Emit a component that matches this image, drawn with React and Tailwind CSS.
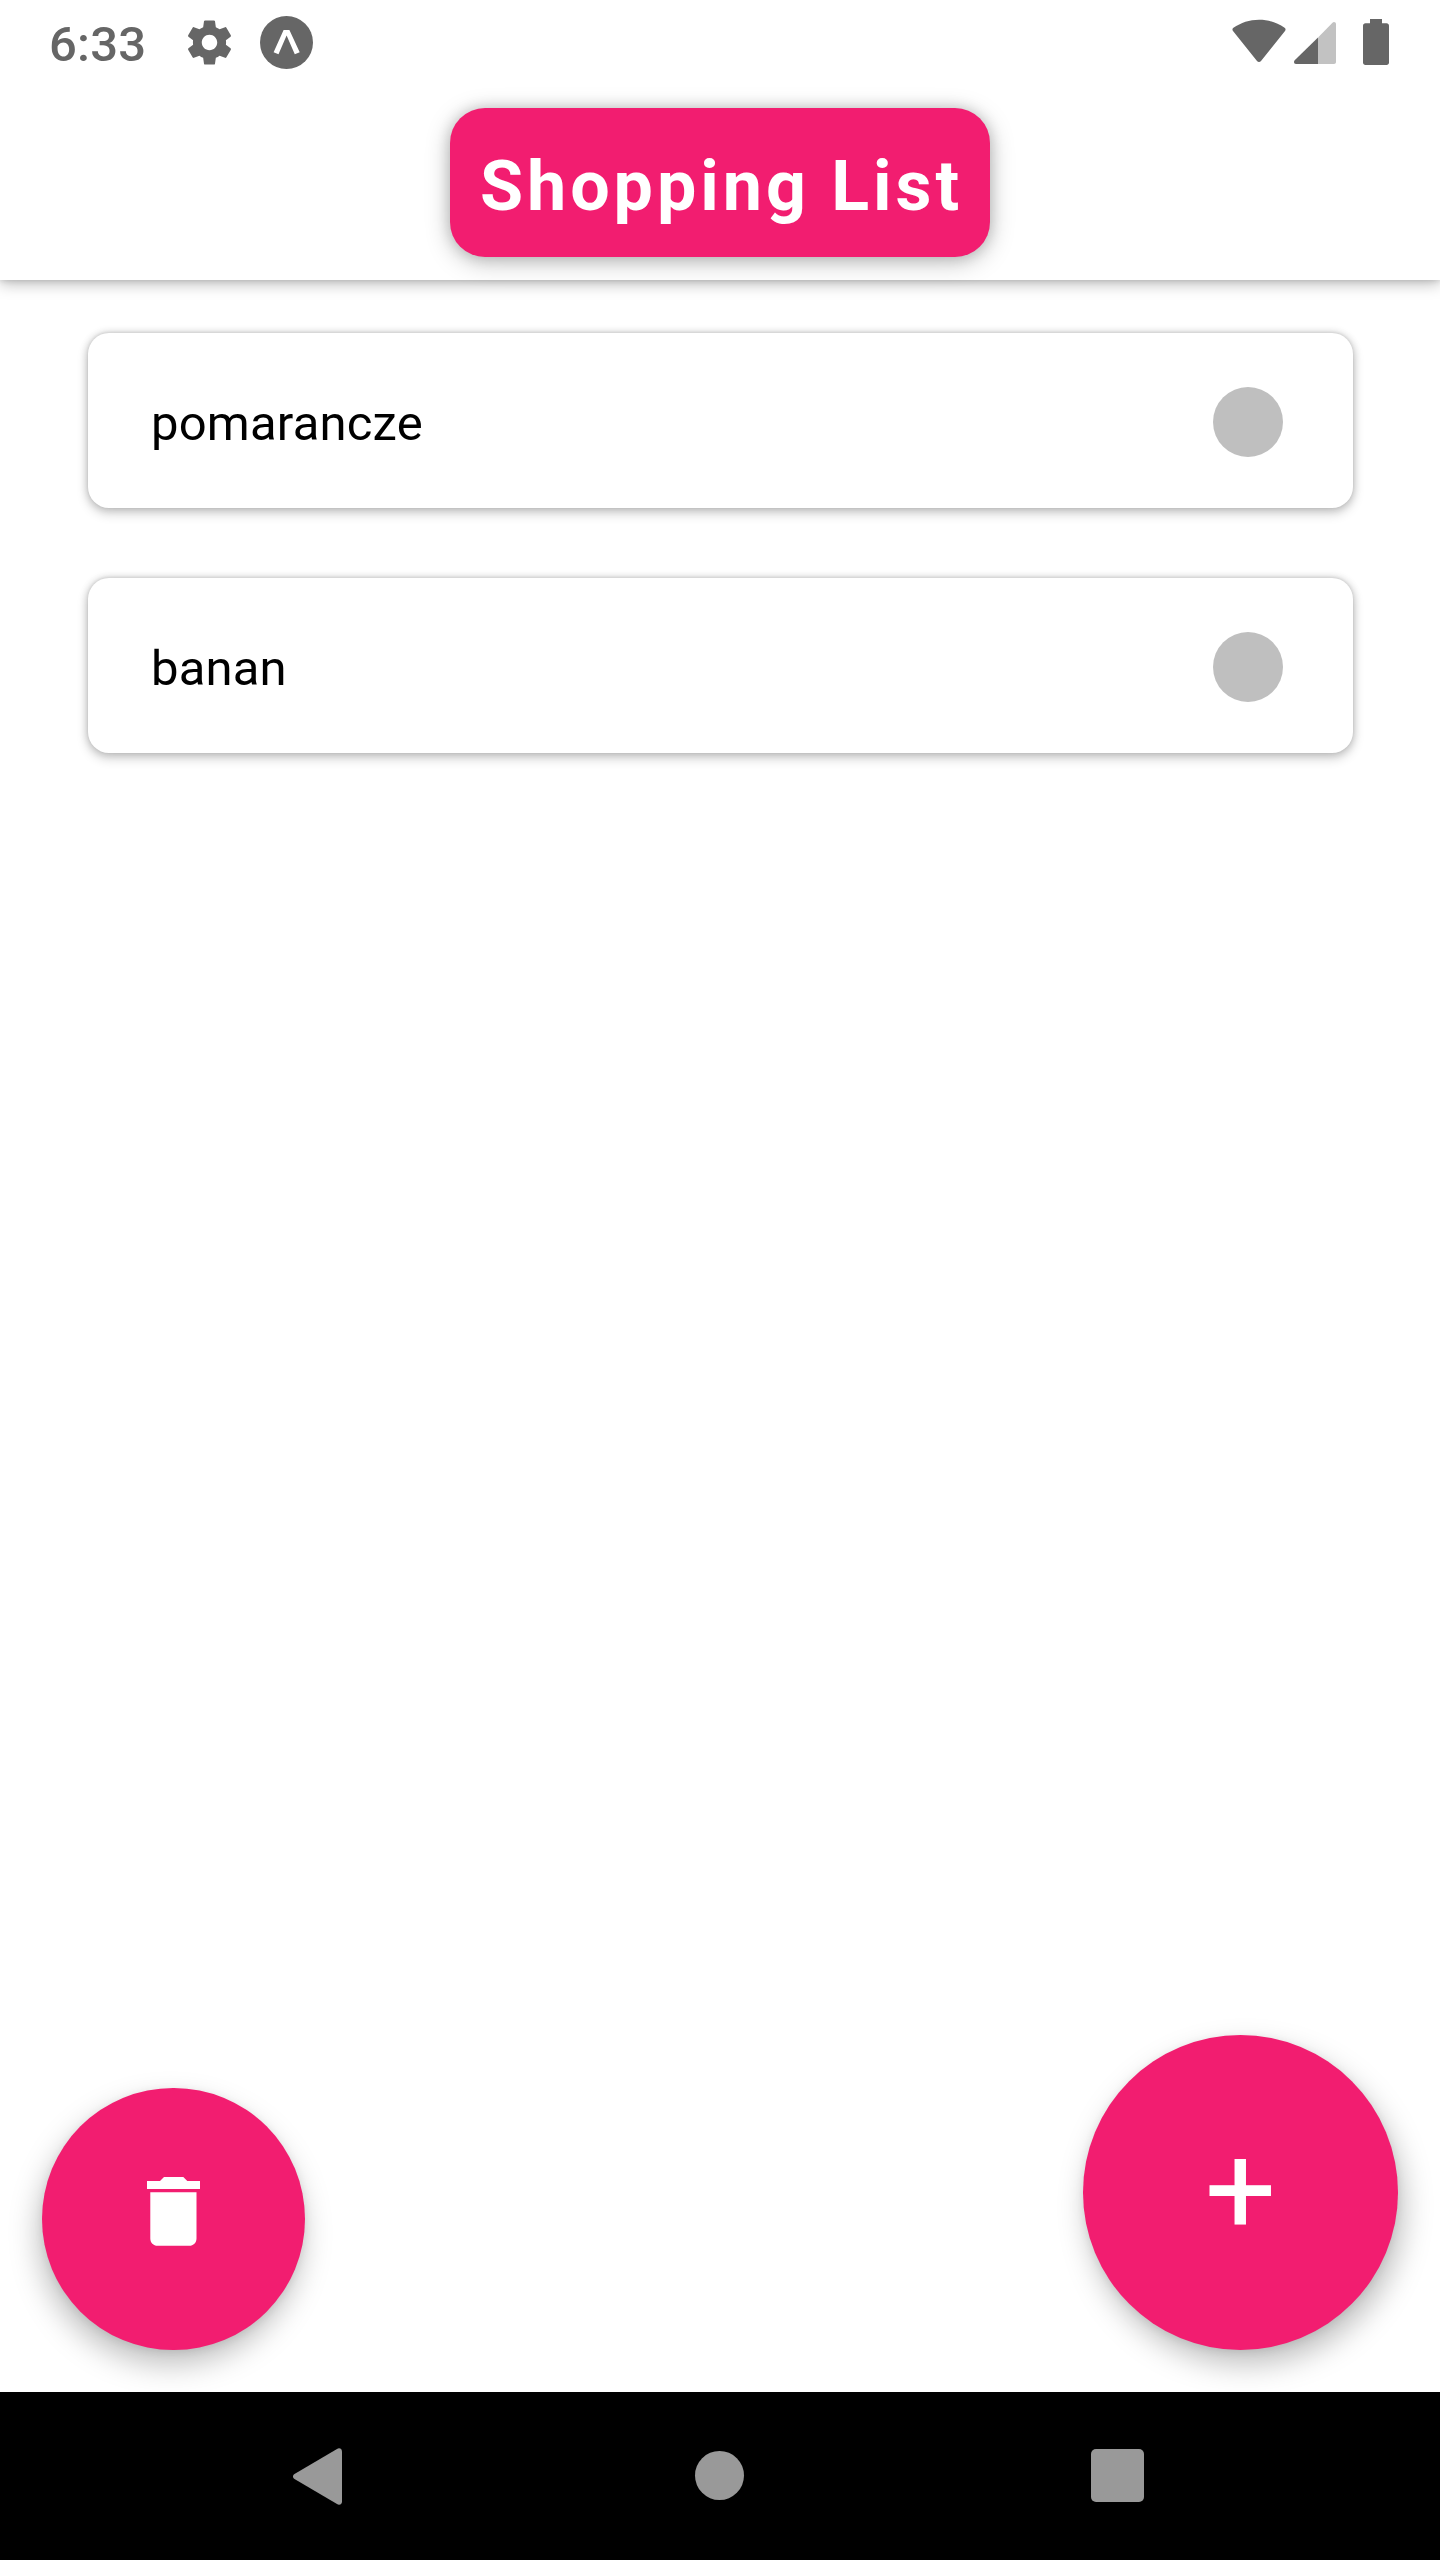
import React from "react";

const items = ["pomarancze", "banan"];

function StatusBar() {
  return (
    <div className="flex h-[84px] items-start justify-between pl-[49px] pr-[51px] text-[#666666]">
      <div className="flex h-[84px] items-start">
        <span className="mt-[16px] w-[136px] text-[49px] font-medium leading-[58px] tracking-[0.2px]">6:33</span>
        <svg className="ml-[-2px] mt-[16px] h-[53px] w-[53px]" viewBox="0 0 24 24" fill="currentColor">
          <path d="M19.43 12.98c.04-.32.07-.64.07-.98s-.03-.66-.07-.98l2.11-1.65c.19-.15.24-.42.12-.64l-2-3.46c-.12-.22-.39-.3-.61-.22l-2.49 1c-.52-.4-1.08-.73-1.69-.98l-.38-2.65C14.46 2.18 14.25 2 14 2h-4c-.25 0-.46.18-.49.42l-.38 2.65c-.61.25-1.17.59-1.69.98l-2.49-1c-.23-.09-.49 0-.61.22l-2 3.46c-.13.22-.07.49.12.64l2.11 1.65c-.04.32-.07.65-.07.98s.03.66.07.98l-2.11 1.65c-.19.15-.24.42-.12.64l2 3.46c.12.22.39.3.61.22l2.49-1c.52.4 1.08.73 1.69.98l.38 2.65c.03.24.24.42.49.42h4c.25 0 .46-.18.49-.42l.38-2.65c.61-.25 1.17-.59 1.69-.98l2.49 1c.23.09.49 0 .61-.22l2-3.46c.12-.22.07-.49-.12-.64l-2.11-1.65zM12 15.5c-1.93 0-3.5-1.57-3.5-3.5s1.57-3.5 3.5-3.5 3.5 1.57 3.5 3.5-1.57 3.5-3.5 3.5z" />
        </svg>
        <svg className="ml-[24px] mt-[16px] h-[53px] w-[53px]" viewBox="0 0 53 53">
          <circle cx="26.5" cy="26.5" r="26.5" fill="currentColor" />
          <path d="M23.6 14h5.8l10.3 22.2-4.900 2-8.200-18.600-8.100 18.600-4.900-2z" fill="#fff" />
        </svg>
      </div>
      <div className="flex h-[84px] items-start">
        <svg className="mt-[19px] h-[44px] w-[54px]" viewBox="0 0 54 44" fill="currentColor">
          <path d="M1 11.9C.1 10.900.3 9.500 1.400 8.800 9 3.600 17.500.7 27 .7s18 2.900 25.600 8.100c1.100.7 1.300 2.100.4 3.100L29 41.900c-1.100 1.400-2.900 1.400-4 0z" />
        </svg>
        <svg className="ml-[8px] mt-[22px] h-[42px] w-[42px]" viewBox="0 0 42 42" fill="currentColor">
          <path d="M24 15.500V42H2c-2 0-2.600-2.300-1.300-3.700z" />
          <path d="M24 15.500 38.500.700C39.800-.6 42 .2 42 2v38c0 1.200-.8 2-2 2H24z" fill="#c2c2c2" />
        </svg>
        <svg className="ml-[27px] mt-[19px] h-[46px] w-[26px]" viewBox="0 0 26 46" fill="currentColor">
          <path d="M7 0h12v4.300h4.500c1.500 0 2.500 1 2.500 2.500v36.700c0 1.500-1 2.500-2.500 2.500h-21C1 46 0 45 0 43.500V6.800C0 5.300 1 4.300 2.500 4.300H7z" />
        </svg>
      </div>
    </div>
  );
}

function ListItem({ label }) {
  return (
    <li className="flex h-[175px] items-center justify-between rounded-[21px] bg-white pl-[63px] pr-[70px] shadow-[0_5px_12px_rgba(0,0,0,0.2),0_0_8px_rgba(0,0,0,0.18),0_-1px_3px_rgba(0,0,0,0.08)]">
      <span className="mt-[7px] text-[49px] leading-[58px] tracking-[0.18px] text-black">{label}</span>
      <button className="mt-[3px] size-[70px] rounded-full bg-[#bfbfbf]" aria-label={`Mark ${label}`} />
    </li>
  );
}

export default function App() {
  return (
    <div className="flex h-[2560px] w-[1440px] flex-col overflow-hidden bg-white font-['Roboto',sans-serif]">
      <header className="relative h-[280px] shrink-0 bg-white shadow-[0_4px_14px_rgba(0,0,0,0.26),0_0_6px_rgba(0,0,0,0.16)]">
        <StatusBar />
        <div className="flex justify-center pt-[24px]">
          <h1 className="flex h-[149px] w-[540px] justify-center whitespace-nowrap rounded-[35px] bg-[#f21d70] pl-[3px] pt-[37px] text-[70px] font-bold leading-[82px] tracking-[3.95px] text-white shadow-[0_5px_24px_rgba(0,0,0,0.25),0_0_14px_rgba(0,0,0,0.16)]">
            Shopping List
          </h1>
        </div>
      </header>

      <main className="flex flex-1 flex-col justify-between">
        <ul className="flex flex-col gap-[70px] pl-[88px] pr-[87px] pt-[53px]">
          {items.map((label) => (
            <ListItem key={label} label={label} />
          ))}
        </ul>
        <div className="flex items-end justify-between px-[42px] pb-[42px]">
          <button
            aria-label="Delete"
            className="flex size-[262.5px] justify-center rounded-full bg-[#f21d70] pt-[89px] shadow-[-3px_14px_30px_rgba(0,0,0,0.26),0_2px_8px_rgba(0,0,0,0.08)]"
          >
            <svg className="h-[69px] w-[53px]" viewBox="0 0 53 69" fill="#fff">
              <path d="M0 4h13l4-4h19.300l4 4H53v8H0zM3.300 15.300h46.200v46.100c0 4.200-3.100 7.300-7.300 7.300H10.600c-4.200 0-7.300-3.100-7.300-7.300z" />
            </svg>
          </button>
          <button
            aria-label="Add"
            className="flex size-[315px] items-center justify-center rounded-full bg-[#f21d70] pb-[6px] text-[126px] leading-[148px] text-white shadow-[5px_14px_30px_rgba(0,0,0,0.26),0_2px_8px_rgba(0,0,0,0.08)]"
          >
            +
          </button>
        </div>
      </main>

      <nav className="relative flex h-[168px] shrink-0 items-center bg-black pl-[293px] text-[#999999]">
        <svg className="h-[57px] w-[49px]" viewBox="0 0 49 57" fill="currentColor">
          <path d="M1.500 26 44 .900C46.500-.5 49 .8 49 3.600v49.800c0 2.800-2.500 4.100-5 2.700L1.500 31C-.5 29.800-.5 27.200 1.500 26z" />
        </svg>
        <span className="mb-px ml-[353px] size-[49px] rounded-full bg-[#999999]" />
        <span className="mb-px ml-[347px] size-[53px] rounded-[5px] bg-[#999999]" />
      </nav>
    </div>
  );
}
